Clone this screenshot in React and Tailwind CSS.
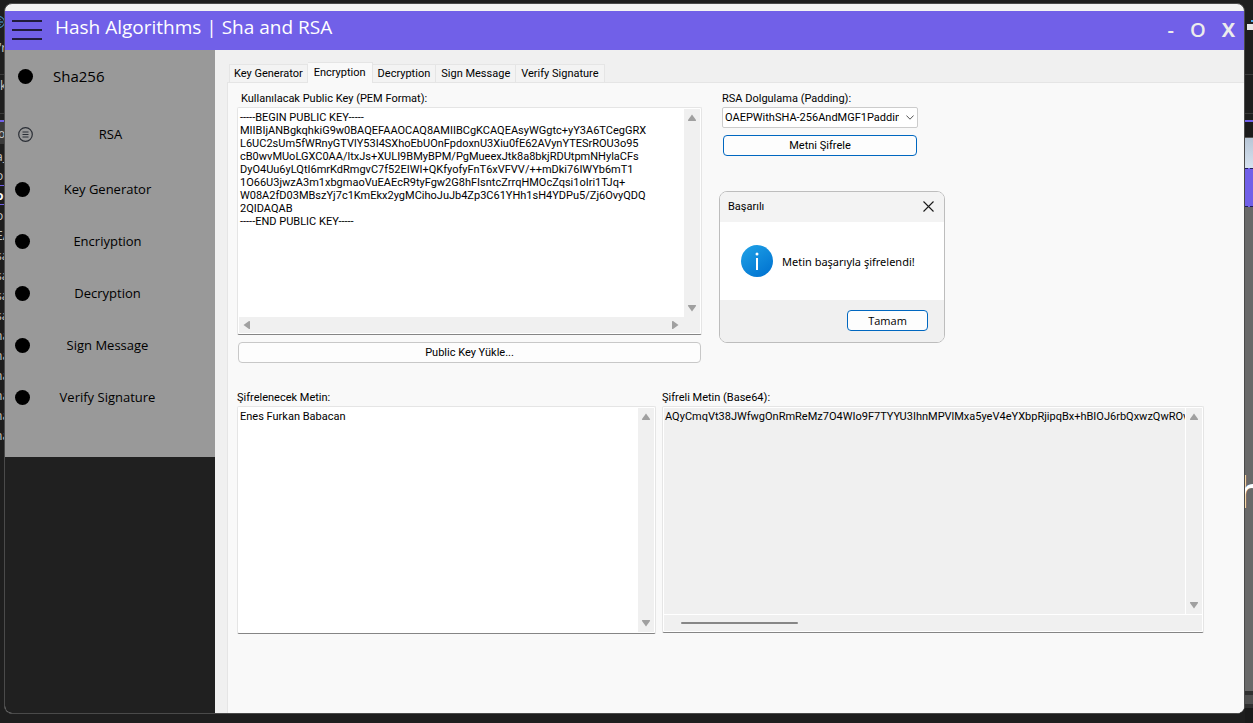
const KEY = `-----BEGIN PUBLIC KEY-----
MIIBIjANBgkqhkiG9w0BAQEFAAOCAQ8AMIIBCgKCAQEAsyWGgtc+yY3A6TCegGRX
L6UC2sUm5fWRnyGTVlY53I4SXhoEbUOnFpdoxnU3Xiu0fE62AVynYTESrROU3o95
cB0wvMUoLGXC0AA/ltxJs+XULI9BMyBPM/PgMueexJtk8a8bkjRDUtpmNHylaCFs
DyO4Uu6yLQtI6mrKdRmgvC7f52EIWI+QKfyofyFnT6xVFVV/++mDki76IWYb6mT1
1O66U3jwzA3m1xbgmaoVuEAEcR9tyFgw2G8hFIsntcZrrqHMOcZqsi1oIri1TJq+
W08A2fD03MBszYj7c1KmEkx2ygMCihoJuJb4Zp3C61YHh1sH4YDPu5/Zj6OvyQDQ
2QIDAQAB
-----END PUBLIC KEY-----`;

const CIPHER =
  "AQyCmqVt38JWfwgOnRmReMz7O4WIo9F7TYYU3IhnMPVlMxa5yeV4eYXbpRjipqBx+hBIOJ6rbQxwzQwROvh";

const ARROWS = {
  up: "M5 1.5 L9 7 Q9.4 8 8.4 8 H1.6 Q.6 8 1 7 Z",
  down: "M5 8.5 L9 3 Q9.4 2 8.4 2 H1.6 Q.6 2 1 3 Z",
  left: "M1.5 5 L7 1 Q8 .6 8 1.6 V8.4 Q8 9.4 7 9 Z",
  right: "M8.5 5 L3 1 Q2 .6 2 1.6 V8.4 Q2 9.4 3 9 Z",
};

function Arrow({ dir }) {
  return (
    <svg viewBox="0 0 10 10" className="size-[10px] shrink-0 fill-[#a0a0a0]" aria-hidden="true">
      <path d={ARROWS[dir]} />
    </svg>
  );
}

function VScroll() {
  return (
    <div className="flex w-4 shrink-0 flex-col items-center justify-between bg-[#f0f0f0] py-1">
      <Arrow dir="up" />
      <Arrow dir="down" />
    </div>
  );
}

function Frame({ className, children }) {
  return (
    <div
      className={
        "flex rounded-[2px] border border-[#e5e5e5] border-b-[#858585] bg-white p-px " + className
      }
    >
      {children}
    </div>
  );
}

const area = "block min-w-0 flex-1 resize-none overflow-hidden whitespace-pre px-px pt-[2px] leading-[13px] outline-none";

function Dot() {
  return <span className="size-[15px] shrink-0 rounded-full bg-black" />;
}

function RsaIcon() {
  return (
    <svg viewBox="0 0 15 15" className="size-[15px] shrink-0" fill="none" stroke="#2b2f36" aria-hidden="true">
      <circle cx="7.5" cy="7.5" r="6.8" strokeWidth="1.2" />
      <path d="M4.5 5h6M4.5 7.5h6M4.5 10h6" strokeWidth="1" />
    </svg>
  );
}

const MENU = ["Key Generator", "Encriyption", "Decryption", "Sign Message", "Verify Signature"];
const TABS = ["Key Generator", "Encryption", "Decryption", "Sign Message", "Verify Signature"];

function Sidebar() {
  return (
    <aside className="w-[210px] shrink-0 bg-[#202020] font-['Open_Sans',sans-serif] text-black">
      <nav className="flex h-[407px] flex-col bg-[#999]">
        <button className="flex h-[52px] items-center gap-5 pl-[13px] text-left text-[15px]">
          <Dot />
          Sha256
        </button>
        <button className="mt-[6px] flex h-[52px] items-center pl-[13px] text-[13px]">
          <RsaIcon />
          <span className="w-[155px] pt-[2px] text-center">RSA</span>
        </button>
        <div className="mt-[3px] flex flex-col">
          {MENU.map((m) => (
            <button key={m} className="flex h-[52px] items-center pl-[10px] text-[13px]">
              <Dot />
              <span className="w-[155px] pt-[2px] text-center">{m}</span>
            </button>
          ))}
        </div>
      </nav>
    </aside>
  );
}

function Tabs() {
  return (
    <div role="tablist" className="flex h-8 items-end pl-[14px]">
      {TABS.map((t) =>
        t === "Encryption" ? (
          <button
            key={t}
            role="tab"
            aria-selected="true"
            className="relative -mb-px h-[21px] border border-l-0 border-b-0 border-[#e5e5e5] bg-[#f9f9f9] px-[6px]"
          >
            {t}
          </button>
        ) : (
          <button
            key={t}
            role="tab"
            aria-selected="false"
            className="h-[18px] border border-l-0 border-b-0 border-[#e5e5e5] bg-[#f3f3f3] px-[5px] pt-px first:border-l first:px-1"
          >
            {t}
          </button>
        )
      )}
    </div>
  );
}

function Dialog() {
  return (
    <div
      role="dialog"
      aria-labelledby="dlg-title"
      className="mt-[35px] -ml-[3px] flex h-[152px] w-[226px] flex-col overflow-hidden rounded-lg border border-[#bdbdbd] bg-white"
    >
      <div className="flex h-[30px] items-center justify-between bg-[#f3f3f3] pr-[10px] pl-2">
        <span id="dlg-title" className="pt-px">
          Başarılı
        </span>
        <button aria-label="Kapat" className="pb-[2px]">
          <svg viewBox="0 0 11 11" className="block size-[11px]" stroke="#1a1a1a" strokeWidth="1.1">
            <path d="M.5 .5 L10.500 10.500 M10.500 .5 L.5 10.500" />
          </svg>
        </button>
      </div>
      <div className="flex flex-1 items-center gap-[9px] pl-[21px] font-['Noto_Sans',sans-serif]">
        <svg viewBox="0 0 32 32" className="size-8 shrink-0" aria-hidden="true">
          <defs>
            <linearGradient id="info" x1="0.15" y1="0" x2="0.85" y2="1">
              <stop offset="0" stopColor="#1ea0e6" />
              <stop offset="1" stopColor="#0072d0" />
            </linearGradient>
          </defs>
          <circle cx="16" cy="16" r="16" fill="url(#info)" />
          <circle cx="16" cy="9" r="1.500" fill="#fff" />
          <rect x="15" y="13" width="2" height="12" fill="#fff" />
        </svg>
        <span className="pt-[2px]">Metin başarıyla şifrelendi!</span>
      </div>
      <div className="flex h-[42px] justify-end bg-[#f0f0f0] pt-[10px] pr-4">
        <button className="h-[21px] w-[81px] rounded border border-[#0067c0] bg-[#fdfdfd] pt-[2px] font-['Open_Sans',sans-serif]">
          Tamam
        </button>
      </div>
    </div>
  );
}

function Panel() {
  return (
    <section className="ml-3 flex flex-1 flex-col border-t border-l border-[#e5e5e5] bg-[#f9f9f9] pr-10 pl-[9px]">
      <div className="flex">
        <div className="flex w-[465px] flex-col">
          <label htmlFor="pem" className="mt-2 pl-1 leading-4">
            Kullanılacak Public Key (PEM Format):
          </label>
          <Frame className="h-[228px] flex-col">
            <div className="flex min-h-0 flex-1">
              <textarea id="pem" readOnly spellCheck={false} className={area} value={KEY} />
              <VScroll />
            </div>
            <div className="flex h-4 shrink-0 items-center justify-between bg-[#f0f0f0] pr-5 pl-[3px]">
              <Arrow dir="left" />
              <Arrow dir="right" />
            </div>
          </Frame>
          <button className="mx-px mt-[7px] h-[21px] rounded border border-[#c8c8c8] bg-[#fdfdfd] pt-px">
            Public Key Yükle...
          </button>
        </div>
        <div className="ml-5 flex w-[226px] flex-col">
          <label htmlFor="pad" className="mt-2 leading-4">
            RSA Dolgulama (Padding):
          </label>
          <div className="grid w-[196px] grid-cols-1 items-center">
            <select
              id="pad"
              className="col-start-1 row-start-1 h-[21px] w-full min-w-0 appearance-none overflow-hidden rounded-[2px] border border-[#ccc] bg-white pt-px pr-[18px] pl-[2px]"
            >
              <option>OAEPWithSHA-256AndMGF1Padding</option>
            </select>
            <svg
              viewBox="0 0 8 5"
              className="pointer-events-none col-start-1 row-start-1 mr-1 h-[5px] w-2 justify-self-end"
              fill="none"
              stroke="#555"
            >
              <path d="M.4 .5 L4 4.200 L7.600 .5" />
            </svg>
          </div>
          <button className="mt-[7px] ml-px h-[21px] w-[194px] rounded border border-[#0067c0] bg-[#fdfdfd] pt-px">
            Metni Şifrele
          </button>
          <Dialog />
        </div>
      </div>
      <div className="mt-[27px] flex gap-[6px]">
        <div className="flex w-[419px] flex-col">
          <label htmlFor="plain" className="leading-4">
            Şifrelenecek Metin:
          </label>
          <Frame className="h-[228px]">
            <textarea id="plain" spellCheck={false} className={area} defaultValue="Enes Furkan Babacan" />
            <VScroll />
          </Frame>
        </div>
        <div className="flex min-w-0 flex-1 flex-col">
          <label htmlFor="cipher" className="leading-4">
            Şifreli Metin (Base64):
          </label>
          <Frame className="h-[227px] flex-col">
            <div className="flex min-h-0 flex-1 gap-px">
              <textarea id="cipher" readOnly spellCheck={false} className={area + " bg-[#f0f0f0]"} value={CIPHER} />
              <VScroll />
            </div>
            <div className="mt-px flex h-4 shrink-0 items-center bg-[#f0f0f0] pl-[17px]">
              <div className="h-[2px] w-[117px] rounded bg-[#868686]" />
            </div>
          </Frame>
        </div>
      </div>
    </section>
  );
}

function TitleBar() {
  return (
    <header className="flex h-[39px] shrink-0 items-center bg-[#7160e8] pr-[9px] pb-[2px] pl-[7px] font-['Open_Sans',sans-serif]">
      <button aria-label="Menu" className="flex w-[30px] flex-col gap-[7px]">
        <span className="h-[2px] bg-[#201c3c]" />
        <span className="h-[2px] bg-[#201c3c]" />
        <span className="h-[2px] bg-[#201c3c]" />
      </button>
      <h1 className="ml-[13px] flex-1 pb-[6px] text-[19px] leading-7 text-white">Hash Algorithms | Sha and RSA</h1>
      <div className="flex items-center gap-4 text-[20px] font-semibold text-[#ececec]">
        <button aria-label="Minimize">-</button>
        <button aria-label="Maximize">O</button>
        <button aria-label="Close" className="font-bold">X</button>
      </div>
    </header>
  );
}

const CODE = [
  ["top-[40px] -left-px", "'r"],
  ["top-[78px] left-0", "k"],
  ["top-[126px] -left-[2px]", "os"],
  ["top-[149px] -left-[4px]", "a_"],
  ["top-[168px] -left-[4px]", "or"],
  ["top-[188px] -left-[4px] font-bold text-white", "or"],
  ["top-[208px] -left-[4px]", "or"],
  ["top-[228px] -left-[4px]", "EA"],
  ["top-[248px] -left-[4px]", "sa"],
  ["top-[268px] -left-[4px]", "sa"],
  ["top-[288px] -left-[4px]", "sa"],
  ["top-[308px] -left-[4px]", "sa"],
  ["top-[328px] -left-[5px]", "na"],
  ["top-[348px] -left-[5px]", "na"],
  ["top-[368px] -left-[5px]", "na"],
  ["top-[388px] -left-[5px]", "na"],
  ["top-[408px] -left-[5px]", "na"],
  ["top-[428px] -left-[5px]", "na"],
];

function BackdropLeft() {
  return (
    <div className="relative w-[4px] shrink-0 overflow-hidden font-['Noto_Sans',sans-serif] text-[12px] leading-4 text-[#c0c0c0]">
      <div className="absolute top-[74px] h-px w-full bg-[#3a3a3a]" />
      <div className="absolute top-[113px] h-px w-full bg-[#3a3a3a]" />
      <div className="absolute top-[120px] h-[2px] w-full bg-[#7160e8]" />
      <div className="absolute top-[122px] h-[22px] w-full bg-[#3a3a3a]" />
      <div className="absolute top-[185px] h-px w-full bg-[#7160e8]" />
      <div className="absolute top-[204px] h-px w-full bg-[#7160e8]" />
      <svg viewBox="0 0 12 12" className="absolute top-[16px] -left-[7px] size-3" fill="none" stroke="#4fa8e8">
        <circle cx="6" cy="6" r="5.500" />
        <path d="M10 6 H5 M7.500 3.500 L5 6 L7.500 8.500" />
      </svg>
      {CODE.map(([pos, t]) => (
        <span key={pos} className={"absolute " + pos}>
          {t}
        </span>
      ))}
    </div>
  );
}

function BackdropRight() {
  return (
    <div className="flex w-2 shrink-0 flex-col overflow-hidden">
      <div className="flex h-[74px] flex-col items-end pt-5">
        <div className="h-[2px] w-[2px] bg-[#4fa8e8]" />
        <div className="mt-[2px] h-[6px] w-[6px] bg-[#e6e6e6]" />
      </div>
      <div className="h-[40px] border-y border-[#3a3a3a]" />
      <div className="mt-[6px] h-[2px] bg-[#7160e8]" />
      <div className="h-4 border-b border-[#555] bg-[#1b1b1b]" />
      <div className="h-[30px] bg-linear-to-b from-[#b8c6d6] to-[#d6e2f0]" />
      <div className="h-[39px] border-y border-dashed border-[#201c5c] bg-[#7160e8]" />
      <div className="flex flex-1 items-start overflow-hidden bg-[#696969] pt-[259px]">
        <span className="-ml-2 font-['Open_Sans',sans-serif] text-[44px] leading-[50px] font-semibold text-white">h</span>
      </div>
      <div className="h-1 bg-[#303030]" />
      <div className="h-[9px] bg-[#505050]" />
      <div className="h-1 bg-[#303030]" />
      <div className="h-[15px] bg-[#1a1a1a]" />
    </div>
  );
}

export default function App() {
  return (
    <div className="flex h-screen min-h-[723px] overflow-hidden bg-[#1e1e1e] font-[Roboto,'Liberation_Sans',Arial,sans-serif] text-[11px] text-black">
      <BackdropLeft />
      <main className="mt-[3px] mb-[9px] flex min-w-0 flex-1 flex-col overflow-hidden rounded-lg border border-[#4a4a4a] bg-[#f3f3f3] pt-[7px]">
        <TitleBar />
        <div className="flex min-h-0 flex-1">
          <Sidebar />
          <div className="flex min-w-0 flex-1 flex-col bg-[#f0f0f0]">
            <Tabs />
            <Panel />
          </div>
        </div>
      </main>
      <BackdropRight />
    </div>
  );
}
